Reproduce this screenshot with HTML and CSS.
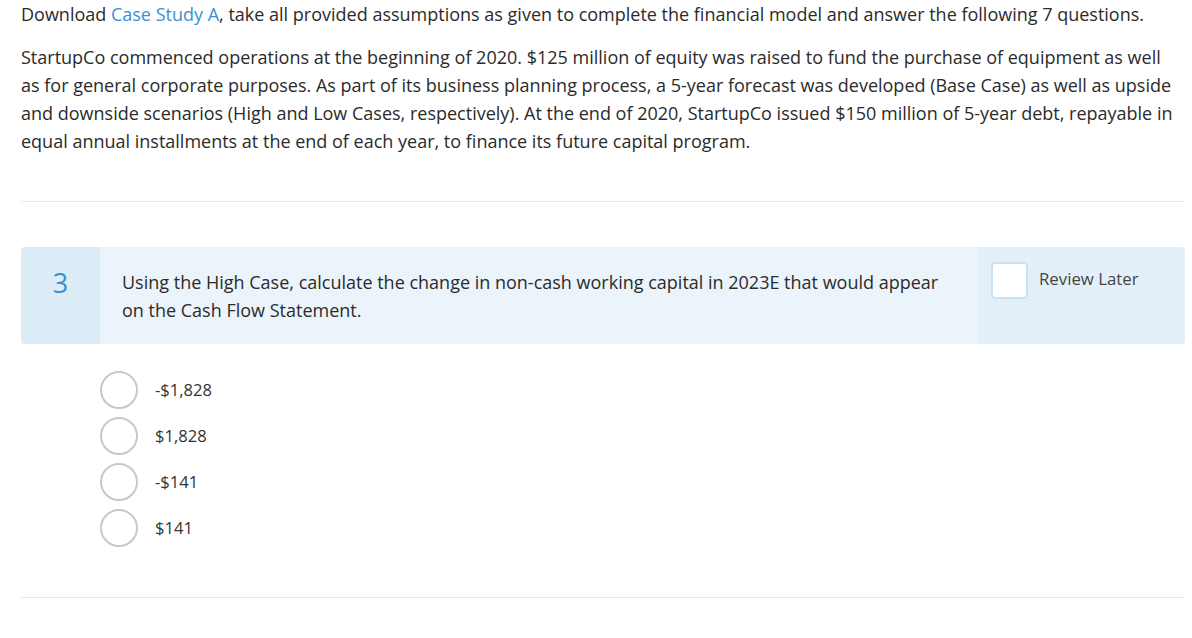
FILE: index.html
```html
<!DOCTYPE html>
<html lang="en">
<head>
<meta charset="utf-8">
<title>Case Study Question</title>
<link rel="stylesheet" href="styles.css">
</head>
<body>
<div class="page">
  <section class="intro">
    <p class="lead">Download <a class="link" href="#">Case Study A</a>, take all provided assumptions as given to complete the financial model and answer the following 7 questions.</p>
    <p class="body-text">StartupCo commenced operations at the beginning of 2020. $125 million of equity was raised to fund the purchase of equipment as well as for general corporate purposes. As part of its business planning process, a 5-year forecast was developed (Base Case) as well as upside and downside scenarios (High and Low Cases, respectively). At the end of 2020, StartupCo issued $150 million of 5-year debt, repayable in equal annual installments at the end of each year, to finance its future capital program.</p>
  </section>
  <hr class="divider divider-top">
  <section class="question">
    <div class="q-number">3</div>
    <div class="q-text">Using the High Case, calculate the change in non-cash working capital in 2023E that would appear on the Cash Flow Statement.</div>
    <label class="q-review">
      <span class="checkbox"></span>
      <span class="review-label">Review Later</span>
    </label>
  </section>
  <ul class="options">
    <li class="option"><span class="radio"></span><span class="opt-label">-$1,828</span></li>
    <li class="option"><span class="radio"></span><span class="opt-label">$1,828</span></li>
    <li class="option"><span class="radio"></span><span class="opt-label">-$141</span></li>
    <li class="option"><span class="radio"></span><span class="opt-label">$141</span></li>
  </ul>
  <hr class="divider divider-bottom">
</div>
</body>
</html>
```

FILE: styles.css
```css
html, body {
  margin: 0;
  padding: 0;
  background: #ffffff;
}

body {
  font-family: "Open Sans", "Noto Sans", sans-serif;
  color: #2b2b2b;
}

.page {
  padding: 0 7px 0 21px;
}

.intro {
  padding-right: 10px;
}

.intro p {
  margin: 0;
  font-size: 18px;
  line-height: 28px;
}

.intro .lead {
  margin-bottom: 15px;
}

.link {
  color: #3a8fd3;
  text-decoration: none;
}

.divider {
  border: 0;
  border-top: 1px solid #e8e8e8;
  margin: 0;
  height: 0;
}

.divider-top {
  margin-top: 46px;
}

.question {
  margin-top: 45px;
  display: flex;
  height: 97px;
  border-radius: 4px;
  overflow: hidden;
  background: #ebf4fb;
}

.q-number {
  width: 79px;
  flex: none;
  background: #dcecf7;
  color: #3a8fd3;
  font-size: 27px;
  line-height: 30px;
  text-align: center;
  padding-top: 21px;
  box-sizing: border-box;
}

.q-text {
  flex: 1;
  padding: 21px 22px 0 22px;
  font-size: 18px;
  line-height: 28px;
  color: #2b2b2b;
}

.q-review {
  width: 208px;
  flex: none;
  background: #e3f0f9;
  display: flex;
  align-items: flex-start;
  padding: 15px 0 0 14px;
  box-sizing: border-box;
}

.checkbox {
  width: 37px;
  height: 37px;
  box-sizing: border-box;
  background: #ffffff;
  border: 2px solid #c9e2f3;
  border-radius: 4px;
  flex: none;
}

.review-label {
  margin-left: 11px;
  font-size: 16.8px;
  line-height: 22px;
  margin-top: 6px;
  color: #444444;
}

.options {
  list-style: none;
  margin: 27px 0 0 79px;
  padding: 0;
  display: flex;
  flex-direction: column;
  gap: 8px;
}

.option {
  display: flex;
  align-items: center;
  height: 38px;
}

.radio {
  width: 38px;
  height: 38px;
  box-sizing: border-box;
  border: 2px solid #c8c8c8;
  border-radius: 50%;
  background: #ffffff;
  flex: none;
}

.opt-label {
  margin-left: 17px;
  font-size: 16.6px;
  line-height: 22px;
  color: #333333;
}

.divider-bottom {
  margin-top: 50px;
}
```
